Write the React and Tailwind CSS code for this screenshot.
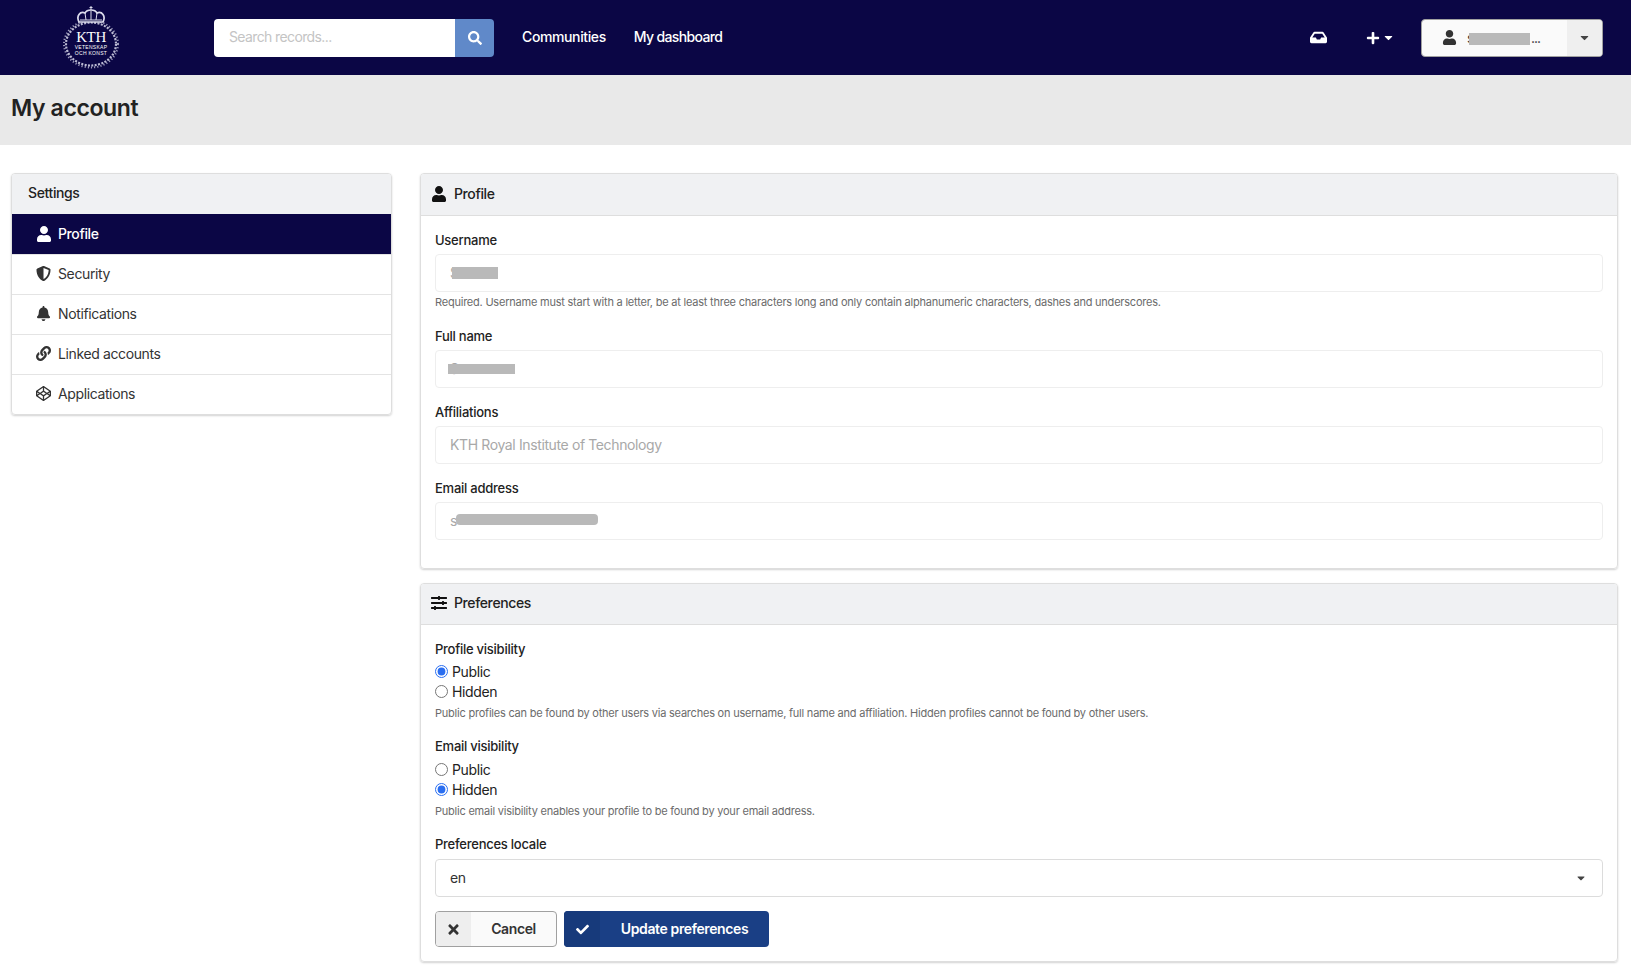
import React from 'react';
import {
  FaBell, FaCaretDown, FaCheck, FaCodepen, FaInbox, FaLink, FaPlus, FaSearch,
  FaShieldAlt, FaSlidersH, FaTimes, FaUser,
} from 'react-icons/fa';

const KthLogo = () => (
  <svg width="60" height="66" viewBox="0 0 60 66" className="text-[#dcdcec]">
    <g fill="none" stroke="currentColor">
      <ellipse cx="30" cy="41" rx="25" ry="21.500" strokeWidth="2.200" strokeDasharray="2 1.400" opacity="0.85" />
      <ellipse cx="30" cy="41" rx="27" ry="23.500" strokeWidth="2" strokeDasharray="1.200 2" opacity="0.7" />
      <path d="M18 19c-3-6 1-11 6-9 2-4 10-4 12 0 5-2 9 3 6 9z" fill="#0b0645" strokeWidth="1.700" />
      <path d="M19 17h22M25 17l-1-7M30 17V8M35 17l1-7" strokeWidth="1" />
      <path d="M30 7V3M28.500 4.500h3" strokeWidth="1" />
    </g>
    <text x="30" y="39" textAnchor="middle" fill="white" fontSize="15" fontFamily="Liberation Serif, serif">KTH</text>
    <text x="30" y="46" textAnchor="middle" fill="white" fontSize="5" letterSpacing="0.3" fontFamily="Liberation Sans, sans-serif">VETENSKAP</text>
    <text x="30" y="52" textAnchor="middle" fill="white" fontSize="5" letterSpacing="0.3" fontFamily="Liberation Sans, sans-serif">OCH KONST</text>
  </svg>
);

const Redact = ({ className }) => <span className={`absolute bg-[#b9b9b9] ${className}`}></span>;

const SideItem = ({ icon: Icon, label, active, iconSize = 'text-[15px]' }) => (
  <div className={`flex h-10 items-center pb-[2px] pl-6 text-sm border-t first:border-t-0 ${active ? 'bg-[#0b0645] text-white border-[#0b0645] font-medium' : 'text-[#333] border-[#e4e4e4]'}`}>
    <span className={`flex w-[22px] justify-start ${iconSize}`}><Icon /></span>
    {label}
  </div>
);

const CardHeader = ({ icon: Icon, title, height }) => (
  <div className={`flex items-center gap-[7px] border-b border-[#dedede] bg-[#f0f1f3] pb-[2px] pl-[10px] text-sm font-medium text-[#222] ${height}`}>
    <span className="flex w-[16px] justify-center text-base text-[#111]"><Icon /></span>
    {title}
  </div>
);

const Label = ({ children, className = 'mb-[6px]' }) => (
  <div className={`h-[16px] text-[13px] leading-[16px] font-medium tracking-[-0.25px] text-[#222] ${className}`}>{children}</div>
);

const Help = ({ children }) => (
  <div className="mt-[3px] text-[11px] leading-[14px] tracking-[-0.22px] text-[#6b6b6b]">{children}</div>
);

const Field = ({ label, children, help }) => (
  <div>
    <Label>{label}</Label>
    <div className="relative flex h-[38px] items-center rounded border border-[#eeeeee] pl-[14px] text-sm text-[#a8a8a8]">
      {children}
    </div>
    {help && <Help>{help}</Help>}
  </div>
);

const Radio = ({ label, name, checked }) => (
  <label className="flex h-5 items-center pb-[2px] text-sm text-[#222]">
    <input type="radio" name={name} defaultChecked={checked} className="m-0 mb-[2px] mr-[4px] h-[13px] w-[13px] accent-[#2a6ef0]" />
    {label}
  </label>
);

const App = () => {
  return (
    <div className="min-h-screen bg-white font-[family-name:Inter,sans-serif] tracking-[-0.38px]">
      <header className="flex h-[75px] items-center bg-[#0b0645]">
        <div className="ml-[61px] mt-[-3px] w-[153px]"><KthLogo /></div>
        <div className="flex h-[38px] w-[280px] overflow-hidden rounded">
          <div className="flex flex-1 items-center bg-white pb-[2px] pl-[15px] text-sm tracking-[-0.62px] text-[#c4c4c4]">Search records...</div>
          <div className="flex w-[39px] items-center justify-center bg-[#6089c9] text-sm text-white"><FaSearch /></div>
        </div>
        <nav className="ml-[28px] flex gap-[28px] pb-[2px] text-sm font-medium text-white">
          <span>Communities</span>
          <span className="tracking-[-0.65px]">My dashboard</span>
        </nav>
        <div className="ml-auto mr-[28px] flex items-center text-white">
          <FaInbox className="mr-[39px] text-[17px]" />
          <FaPlus className="text-[14px]" />
          <FaCaretDown className="ml-[2px] mr-[26px] text-[13px]" />
          <div className="flex h-[38px] w-[182px] overflow-hidden rounded border border-[#a0a0a0] bg-[#fafafa] text-[#333]">
            <div className="relative flex flex-1 items-center pl-[20px] text-sm">
              <FaUser className="mr-[10px] text-[15px] text-[#333]" />
              <span>s</span>
              <Redact className="left-[47px] top-[13px] h-[12px] w-[61px]" />
              <span className="ml-[57px] leading-none tracking-[-1px]">...</span>
            </div>
            <div className="flex w-[35px] items-center justify-center bg-[#efefef] text-[13px] text-[#444]"><FaCaretDown /></div>
          </div>
        </div>
      </header>

      <div className="flex h-[70px] items-center bg-[#e9e9e9] pb-[3px] pl-[11px] text-[23px] font-semibold text-[#222]">My account</div>

      <main className="grid grid-cols-[381px_1fr] items-start gap-[28px] pl-[11px] pr-[13px] pt-[28px] pb-[13px]">
        <aside className="overflow-hidden rounded border border-[#dedede] shadow-[0_1px_2px_rgba(0,0,0,0.18)]">
          <div className="flex h-[40px] items-center bg-[#f0f1f3] pb-[2px] pl-[16px] text-sm font-medium text-[#222]">Settings</div>
          <SideItem icon={FaUser} label="Profile" active iconSize="text-base" />
          <SideItem icon={FaShieldAlt} label="Security" />
          <SideItem icon={FaBell} label="Notifications" />
          <SideItem icon={FaLink} label="Linked accounts" />
          <SideItem icon={FaCodepen} label="Applications" />
        </aside>

        <div className="flex flex-col gap-[14px]">
          <section className="overflow-hidden rounded border border-[#dedede] shadow-[0_1px_2px_rgba(0,0,0,0.18)]">
            <CardHeader icon={FaUser} title="Profile" height="h-[42px]" />
            <div className="flex flex-col gap-[16px] px-[14px] pt-[16px] pb-[28px]">
              <div className="mb-[3px]">
                <Field label="Username" help="Required. Username must start with a letter, be at least three characters long and only contain alphanumeric characters, dashes and underscores.">
                  <span>S</span>
                  <Redact className="left-[16px] top-[12px] h-[12px] w-[46px]" />
                </Field>
              </div>
              <Field label="Full name">
                <span>S</span>
                <Redact className="left-[12px] top-[13px] h-[10px] w-[67px]" />
              </Field>
              <Field label="Affiliations">KTH Royal Institute of Technology</Field>
              <Field label="Email address">
                <span>s</span>
                <Redact className="left-[20px] top-[11px] h-[11px] w-[142px] rounded-[4px]" />
              </Field>
            </div>
          </section>

          <section className="overflow-hidden rounded border border-[#dedede] shadow-[0_1px_2px_rgba(0,0,0,0.18)]">
            <CardHeader icon={FaSlidersH} title="Preferences" height="h-[41px]" />
            <div className="px-[14px] pt-[16px] pb-[14px]">
              <Label>Profile visibility</Label>
              <Radio name="profile" label="Public" checked />
              <Radio name="profile" label="Hidden" />
              <Help>Public profiles can be found by other users via searches on username, full name and affiliation. Hidden profiles cannot be found by other users.</Help>
              <Label className="mt-[18px] mb-[7px]">Email visibility</Label>
              <Radio name="email" label="Public" />
              <Radio name="email" label="Hidden" checked />
              <Help>Public email visibility enables your profile to be found by your email address.</Help>
              <Label className="mt-[18px] mb-[7px]">Preferences locale</Label>
              <div className="flex h-[38px] items-center justify-between rounded border border-[#dcdcdc] pb-[1px] pl-[14px] pr-[15px] text-sm text-[#333]">
                <span>en</span>
                <FaCaretDown className="text-[12px] text-[#444]" />
              </div>
              <div className="mt-[14px] flex gap-[7px]">
                <button className="flex h-[36px] w-[122px] overflow-hidden rounded border border-[#a0a0a0] bg-[#fafafa] text-sm font-semibold text-[#333]">
                  <span className="flex h-full w-[35px] items-center justify-center bg-[#eeeeee] text-[15px]"><FaTimes /></span>
                  <span className="flex h-full flex-1 items-center justify-center">Cancel</span>
                </button>
                <button className="flex h-[36px] w-[205px] overflow-hidden rounded bg-[#1a3f85] text-sm font-semibold text-white">
                  <span className="flex h-full w-[36px] items-center justify-center bg-[#173a7b] text-[13px]"><FaCheck /></span>
                  <span className="flex h-full flex-1 items-center justify-center">Update preferences</span>
                </button>
              </div>
            </div>
          </section>
        </div>
      </main>
    </div>
  );
};

export default App;
